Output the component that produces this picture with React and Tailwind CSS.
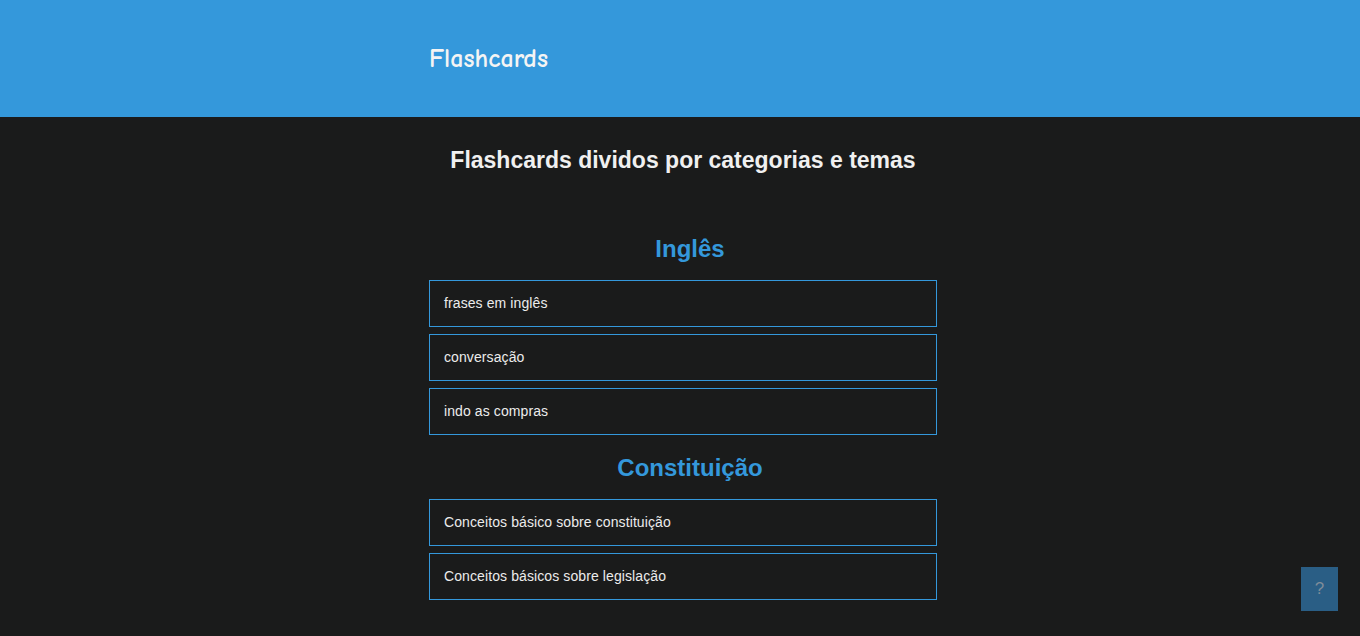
import React from 'react';

const SECTIONS = [
  {
    title: 'Inglês',
    items: ['frases em inglês', 'conversação', 'indo as compras'],
  },
  {
    title: 'Constituição',
    items: ['Conceitos básico sobre constituição', 'Conceitos básicos sobre legislação'],
  },
];

export default function App() {
  return (
    <div className="min-h-screen bg-[#1a1b1b] font-['Liberation_Sans',Arial,sans-serif]">
      {/* Top bar */}
      <header className="h-[117px] bg-[#3498db]">
        <div className="w-[508px] pt-[43px] ml-[429px]">
          <h1 className="text-[26px] leading-[32px] font-bold text-[#f4f4f4] font-['Comic_Sans_MS','Comic_Neue',cursive]">
            Flashcards
          </h1>
        </div>
      </header>

      <main className="w-[508px] ml-[429px] pb-8">
        <h2 className="mt-[30px] text-center text-[23px] leading-[26px] font-bold text-[#f0f0f0]">
          Flashcards dividos por categorias e temas
        </h2>

        <div className="mt-[62px] flex flex-col gap-[19px]">
          {SECTIONS.map((section) => (
            <section key={section.title} className="flex flex-col gap-[17px]">
              <h3 className="text-center pl-[14px] text-[24px] leading-[28px] font-bold text-[#3498db]">
                {section.title}
              </h3>
              <ul className="flex flex-col gap-[7px]">
                {section.items.map((item) => (
                  <li
                    key={item}
                    className="h-[47px] flex items-center px-[14px] border border-[#3498db] text-[14px] tracking-[0.1px] text-[#ececec]"
                  >
                    {item}
                  </li>
                ))}
              </ul>
            </section>
          ))}
        </div>
      </main>

      {/* Help button */}
      <button className="fixed right-[22px] bottom-[25px] w-[37px] h-[44px] bg-[#2a5e85] text-[#7f8c99] text-[17px] flex items-center justify-center">
        ?
      </button>
    </div>
  );
}
